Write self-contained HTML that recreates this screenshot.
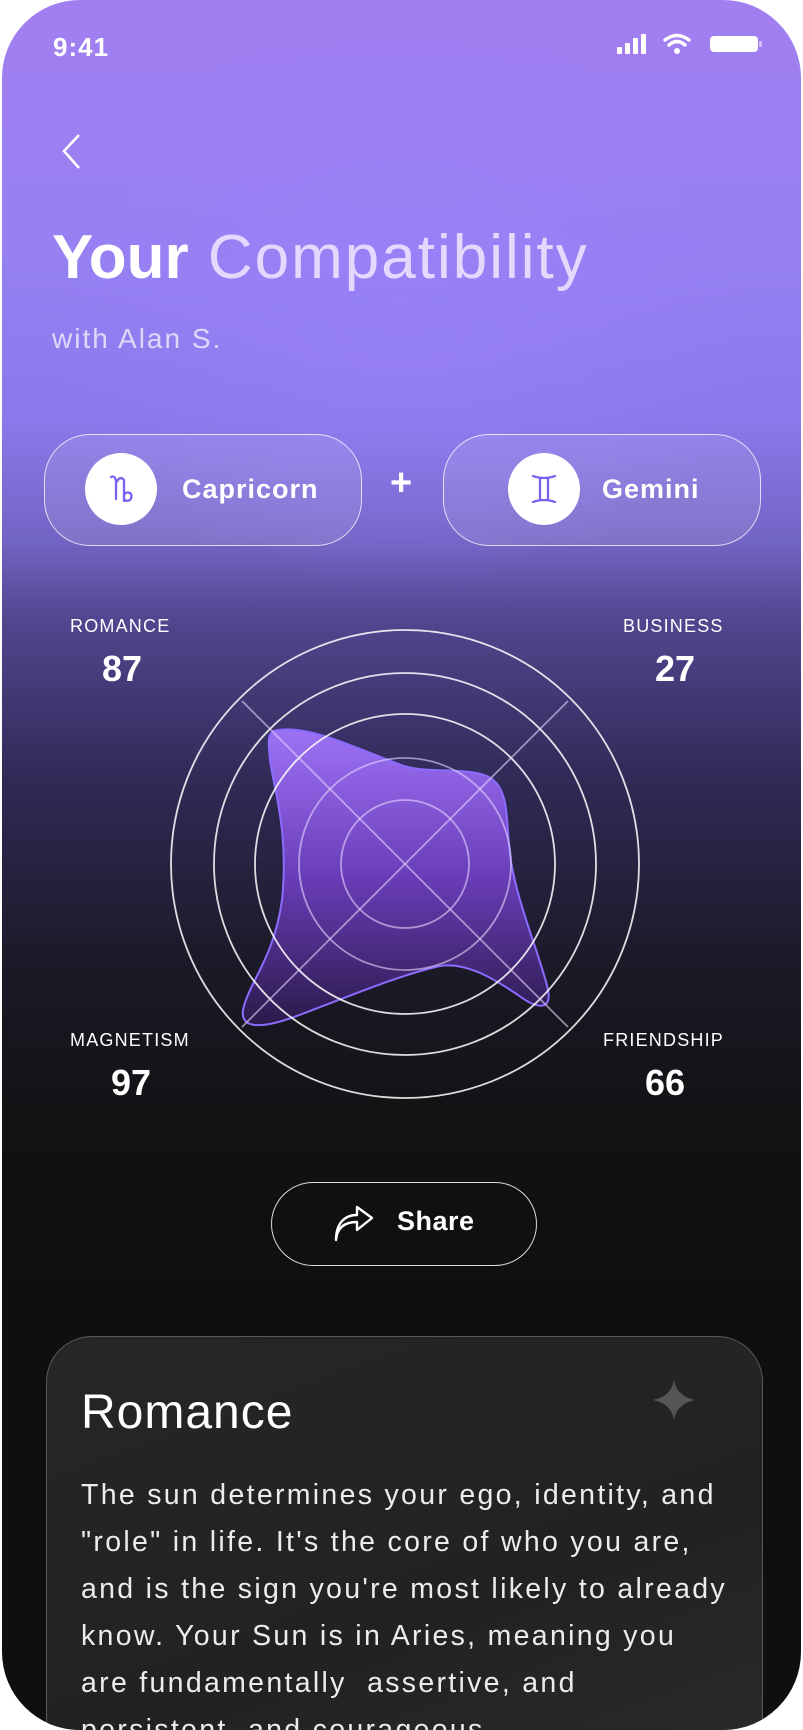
<!DOCTYPE html>
<html><head><meta charset="utf-8"><style>
*{margin:0;padding:0;box-sizing:border-box}
html,body{width:803px;height:1730px;background:#fff;overflow:hidden;font-family:"Liberation Sans",sans-serif}
.phone{position:absolute;left:2px;top:0;width:799px;height:1730px;border-radius:78px;overflow:hidden;
background:
radial-gradient(ellipse 520px 420px at 400px 300px,rgba(155,130,250,0.55),rgba(155,130,250,0) 70%),
linear-gradient(180deg,#a27ff0 0px,#9680f2 250px,#8a79eb 420px,#7265c4 540px,#51468f 620px,#302a56 780px,#1b1a28 960px,#121214 1120px,#0f0f0f 1300px)}
.abs{position:absolute}
.t{color:#fff}
.pill{position:absolute;top:434px;height:112px;width:318px;border:1.5px solid rgba(255,255,255,0.75);border-radius:46px;background:rgba(255,255,255,0.1)}
.circ{position:absolute;width:72px;height:72px;border-radius:50%;background:#fff;top:19px;left:42px}
.lbl{position:absolute;color:#fff;font-size:18px;letter-spacing:1.2px}
.num{position:absolute;color:#fff;font-size:36px;font-weight:bold;text-align:center}
.card{position:absolute;left:44px;top:1336px;width:717px;height:460px;border-radius:46px;border:1.5px solid #5a5a5a;background:linear-gradient(160deg,#262626,#222 60%,#2c2c2c)}
</style></head><body>
<div class="phone">
<div class="abs t" style="left:51px;top:32px;font-size:26px;font-weight:bold;letter-spacing:1px">9:41</div>
<svg class="abs" style="left:613px;top:32px" width="150" height="26" viewBox="0 0 150 26">
<rect x="2" y="15" width="5" height="7" rx="1" fill="#fff"/><rect x="10" y="11" width="5" height="11" rx="1" fill="#fff"/><rect x="18" y="6" width="5" height="16" rx="1" fill="#fff"/><rect x="26" y="2" width="5" height="20" rx="1" fill="#fff"/>
<path d="M50 8 Q62 -1 74 8" stroke="#fff" stroke-width="3.5" fill="none" stroke-linecap="round"/><path d="M54 13 Q62 6 70 13" stroke="#fff" stroke-width="3.5" fill="none" stroke-linecap="round"/><circle cx="62" cy="19" r="3" fill="#fff"/>
<rect x="95" y="4" width="48" height="16" rx="4" fill="#fff"/><rect x="144" y="9" width="3" height="6" rx="1" fill="rgba(255,255,255,0.5)"/>
</svg>
<svg class="abs" style="left:56px;top:132px" width="30" height="40"><path d="M21 3 L6 19 L21 36" stroke="#fff" stroke-width="2.6" fill="none"/></svg>
<div class="abs" style="left:50px;top:222px;font-size:62px;letter-spacing:2px;white-space:nowrap"><span style="color:#fff;font-weight:bold;letter-spacing:0px">Your</span> <span style="color:#e3d9ff">Compatibility</span></div>
<div class="abs" style="left:50px;top:323px;font-size:28px;letter-spacing:2px;color:#e0d8fa">with Alan S.</div>

<div class="pill" style="left:42px"><div class="circ" style="left:40px;top:18px">
<svg width="72" height="72" viewBox="0 0 72 72"><path d="M26 24 Q30 22 31 28 L31 46 M31 30 Q35 22 39 27 L39 48 M39 44 Q39 38 45 40 Q48 43 45 47 Q41 49 39 46" stroke="#7a63f0" stroke-width="2.3" fill="none" stroke-linecap="round"/></svg></div>
<div class="abs t" style="left:137px;top:39px;font-size:27px;font-weight:bold;letter-spacing:1px">Capricorn</div></div>
<div class="abs t" style="left:388px;top:462px;font-size:38px;font-weight:bold">+</div>
<div class="pill" style="left:441px"><div class="circ" style="left:64px;top:18px">
<svg width="72" height="72" viewBox="0 0 72 72"><path d="M25 23 Q36 27 47 23 M25 49 Q36 45 47 49 M32 25 L32 47 M40 25 L40 47" stroke="#7a63f0" stroke-width="2.3" fill="none" stroke-linecap="round"/></svg></div>
<div class="abs t" style="left:158px;top:39px;font-size:27px;font-weight:bold;letter-spacing:1px">Gemini</div></div>

<svg class="abs" style="left:0;top:0" width="803" height="1150" viewBox="0 0 803 1150">
<defs><linearGradient id="bg" x1="0" y1="0" x2="0" y2="1"><stop offset="0" stop-color="#9d72f5"/><stop offset="0.5" stop-color="#6a3db8"/><stop offset="1" stop-color="#2a1a4a"/></linearGradient></defs>
<path d="M272 731 C304 722 362 752 402 766 C427 774 472 766 490 779 C508 792 504 825 508 855 C515 905 540 960 546 990 C550 1010 536 1010 516 995 C488 976 462 962 438 966 C398 975 350 995 300 1014 C262 1029 238 1030 241 1010 C247 982 272 958 280 900 C287 832 272 790 268 760 C266 742 266 733 272 731 Z" fill="url(#bg)" stroke="#8c6cff" stroke-width="2"/>
<g fill="none" stroke="rgba(255,255,255,0.85)" stroke-width="1.8">
<circle cx="403" cy="864" r="234"/><circle cx="403" cy="864" r="191"/><circle cx="403" cy="864" r="150"/></g>
<g fill="none" stroke="rgba(230,215,255,0.6)" stroke-width="1.8">
<circle cx="403" cy="864" r="106"/><circle cx="403" cy="864" r="64"/>
<line x1="240" y1="701" x2="566" y2="1027"/><line x1="566" y1="701" x2="240" y2="1027"/></g>
</svg>
<div class="lbl" style="left:68px;top:616px">ROMANCE</div><div class="num" style="left:70px;top:648px;width:100px">87</div>
<div class="lbl" style="left:621px;top:616px">BUSINESS</div><div class="num" style="left:623px;top:648px;width:100px">27</div>
<div class="lbl" style="left:68px;top:1030px">MAGNETISM</div><div class="num" style="left:79px;top:1062px;width:100px">97</div>
<div class="lbl" style="left:601px;top:1030px">FRIENDSHIP</div><div class="num" style="left:613px;top:1062px;width:100px">66</div>

<div class="abs" style="left:269px;top:1182px;width:266px;height:84px;border:1.8px solid rgba(255,255,255,0.85);border-radius:42px"></div>
<svg class="abs" style="left:330px;top:1204px" width="46" height="40" viewBox="0 0 46 40"><path d="M4 36 C5 24 12 18 25 18 L25 26 L40 14 L25 3 L25 11 C12 11 4 20 4 36 Z" stroke="#fff" stroke-width="2.4" fill="none" stroke-linejoin="round"/></svg>
<div class="abs t" style="left:395px;top:1206px;font-size:27px;font-weight:bold;letter-spacing:0.5px">Share</div>

<div class="card">
<div class="abs t" style="left:34px;top:48px;font-size:48px;letter-spacing:1px">Romance</div>
<svg class="abs" style="left:604px;top:40px" width="46" height="46" viewBox="0 0 46 46"><path d="M23 2 Q25 19 44 23 Q25 27 23 44 Q21 27 2 23 Q21 19 23 2 Z" fill="#555"/></svg>
<div class="abs" style="left:34px;top:135px;width:680px;font-size:28.5px;letter-spacing:2.3px;line-height:47px;color:#ececec;white-space:nowrap">The sun determines your ego, identity, and<br>"role" in life. It's the core of who you are,<br>and is the sign you're most likely to already<br>know. Your Sun is in Aries, meaning you<br>are fundamentally&nbsp; assertive, and<br>persistent, and courageous.</div>
</div>
</div>
</body></html>
